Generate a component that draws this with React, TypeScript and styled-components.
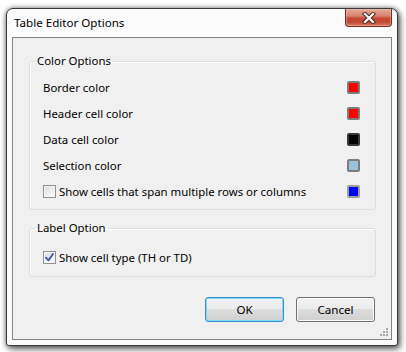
import React from 'react';
import styled, {createGlobalStyle} from "styled-components";

const GlobalStyle = createGlobalStyle`
    html, body {
        margin: 0;
        background: #ffffff;
    }
    body {
        font-family: "Noto Sans", "Open Sans", sans-serif;
        font-size: 11.4px;
        color: #000000;
    }
`;

type ColorRowType = {
    label: string
    fill: string
    edge: string
    checkbox?: boolean
}

const colorRows: ColorRowType[] = [
    {label: "Border color", fill: "#ff0000", edge: "#7c7c7c"},
    {label: "Header cell color", fill: "#ff0000", edge: "#7c7c7c"},
    {label: "Data cell color", fill: "#000000", edge: "#383838"},
    {label: "Selection color", fill: "#99c1dc", edge: "#7c7c7c"},
    {label: "Show cells that span multiple rows or columns", fill: "#0000ff", edge: "#9c9c9c", checkbox: true},
];

const CheckBox = (props: { checked: boolean }) => {
    return (
        <Box>
            {props.checked && (
                <svg width="9" height="9" viewBox="0 0 9 9">
                    <path d="M1 4.6 L3.4 7.4 L8 1" fill="none" stroke="#3d56a6" strokeWidth="1.8"
                          strokeLinejoin="round" strokeLinecap="round"/>
                </svg>
            )}
        </Box>
    );
};

const App = () => {
    return (
        <Screen>
            <GlobalStyle/>
            <Window>
                <TitleBar>
                    <Title>Table Editor Options</Title>
                    <CloseButton>
                        <svg width="14" height="12" viewBox="0 0 14 12">
                            <path d="M3 2 L11 10 M11 2 L3 10" stroke="#4a2a24" strokeWidth="4.2" strokeLinecap="square"/>
                            <path d="M3 2 L11 10 M11 2 L3 10" stroke="#ffffff" strokeWidth="2.2" strokeLinecap="square"/>
                        </svg>
                    </CloseButton>
                </TitleBar>
                <Client>
                    <Group>
                        <Legend>Color Options</Legend>
                        <GroupBody top={5} bottom={5}>
                            {colorRows.map(row => (
                                <Row key={row.label}>
                                    <Label>
                                        {row.checkbox && <CheckBox checked={false}/>}
                                        {row.label}
                                    </Label>
                                    <Swatch fill={row.fill} edge={row.edge}/>
                                </Row>
                            ))}
                        </GroupBody>
                    </Group>
                    <Group>
                        <Legend>Label Option</Legend>
                        <GroupBody top={8} bottom={6}>
                            <Row>
                                <Label>
                                    <CheckBox checked={true}/>
                                    Show cell type (TH or TD)
                                </Label>
                            </Row>
                        </GroupBody>
                    </Group>
                    <Buttons>
                        <Button primary>OK</Button>
                        <Button>Cancel</Button>
                    </Buttons>
                    <Grip>
                        <svg width="9" height="9" viewBox="0 0 9 9" fill="#a9a9a9">
                            <rect x="6" y="0" width="2" height="2"/>
                            <rect x="3" y="3" width="2" height="2"/>
                            <rect x="6" y="3" width="2" height="2"/>
                            <rect x="0" y="6" width="2" height="2"/>
                            <rect x="3" y="6" width="2" height="2"/>
                            <rect x="6" y="6" width="2" height="2"/>
                        </svg>
                    </Grip>
                </Client>
            </Window>
        </Screen>
    );
};

export default App;

const Screen = styled.div`
    padding: 8px 0 0 6px;
    width: 406px;
    height: 352px;
    box-sizing: border-box;
    overflow: hidden;
`;

const Window = styled.div`
    width: 392px;
    height: 338px;
    box-sizing: border-box;
    display: flex;
    flex-direction: column;
    background: #fbfbfb;
    border: 1px solid #3a3a3a;
    border-radius: 7px 7px 3px 3px;
    box-shadow: 0 0 5px rgba(0, 0, 0, 0.45), 2px 3px 7px rgba(0, 0, 0, 0.6);
`;

const TitleBar = styled.div`
    height: 28px;
    display: flex;
    justify-content: space-between;
    align-items: flex-start;
    padding: 0 5px 0 7px;
`;

const Title = styled.span`
    line-height: 28px;
    font-size: 11.6px;
    color: #000000;
`;

const CloseButton = styled.div`
    width: 47px;
    height: 18px;
    box-sizing: border-box;
    display: flex;
    align-items: center;
    justify-content: center;
    border: 1px solid #7a2c20;
    border-top: none;
    border-radius: 0 0 4px 4px;
    background: linear-gradient(#e6a999 0%, #d88470 40%, #c5472f 55%, #c24a33 78%, #d9826b 100%);
    box-shadow: inset 0 0 0 1px rgba(255, 210, 200, 0.35);
`;

const Client = styled.div`
    position: relative;
    flex: 1;
    margin: 0 5px 5px 5px;
    display: flex;
    flex-direction: column;
    background: #f0f0f0;
    border: 1px solid #838383;
    padding: 15px 15px 16px 16px;
`;

const Group = styled.fieldset`
    margin: 0 0 10px 0;
    padding: 0;
    border: 1px solid #d5dfe5;
    border-radius: 3px;
    box-shadow: inset 1px 1px 0 #ffffff;
    min-width: 0;
`;

const Legend = styled.legend`
    margin-left: 5px;
    padding: 0 2px;
    line-height: 16px;
`;

const GroupBody = styled.div<{ top: number, bottom: number }>`
    display: flex;
    flex-direction: column;
    padding: ${props => props.top}px 15px ${props => props.bottom}px 13px;
`;

const Row = styled.div`
    height: 26px;
    display: flex;
    align-items: center;
    justify-content: space-between;
`;

const Label = styled.span`
    display: flex;
    align-items: center;
    gap: 3px;
`;

const Box = styled.span`
    width: 13px;
    height: 13px;
    box-sizing: border-box;
    display: flex;
    align-items: center;
    justify-content: center;
    border: 1px solid #8e8f8f;
    background: linear-gradient(135deg, #dcdcdc 0%, #f0f0f0 60%, #fbfbfb 100%);
    box-shadow: inset 0 0 0 1px #f6f6f6;
`;

const Swatch = styled.span<{ fill: string, edge: string }>`
    width: 13px;
    height: 13px;
    box-sizing: border-box;
    background: ${props => props.fill};
    border: 2px solid ${props => props.edge};
    border-radius: 2px;
`;

const Buttons = styled.div`
    display: flex;
    justify-content: flex-end;
    gap: 12px;
    margin-top: 10px;
    padding-right: 1px;
`;

const Button = styled.button<{ primary?: boolean }>`
    width: 79px;
    height: 25px;
    padding: 0;
    font-family: "Noto Sans", "Open Sans", sans-serif;
    font-size: 11.6px;
    color: #000000;
    border-radius: 3px;
    border: 1px solid ${props => props.primary ? "#3a8ccc" : "#707070"};
    background: linear-gradient(#f2f2f2 0%, #ebebeb 50%, #dddddd 50%, #cfcfcf 100%);
    box-shadow: inset 0 0 0 1px ${props => props.primary ? "#7fdcf6" : "#fbfbfb"};
`;

const Grip = styled.div`
    position: absolute;
    right: 2px;
    bottom: 2px;
    display: flex;
`;
